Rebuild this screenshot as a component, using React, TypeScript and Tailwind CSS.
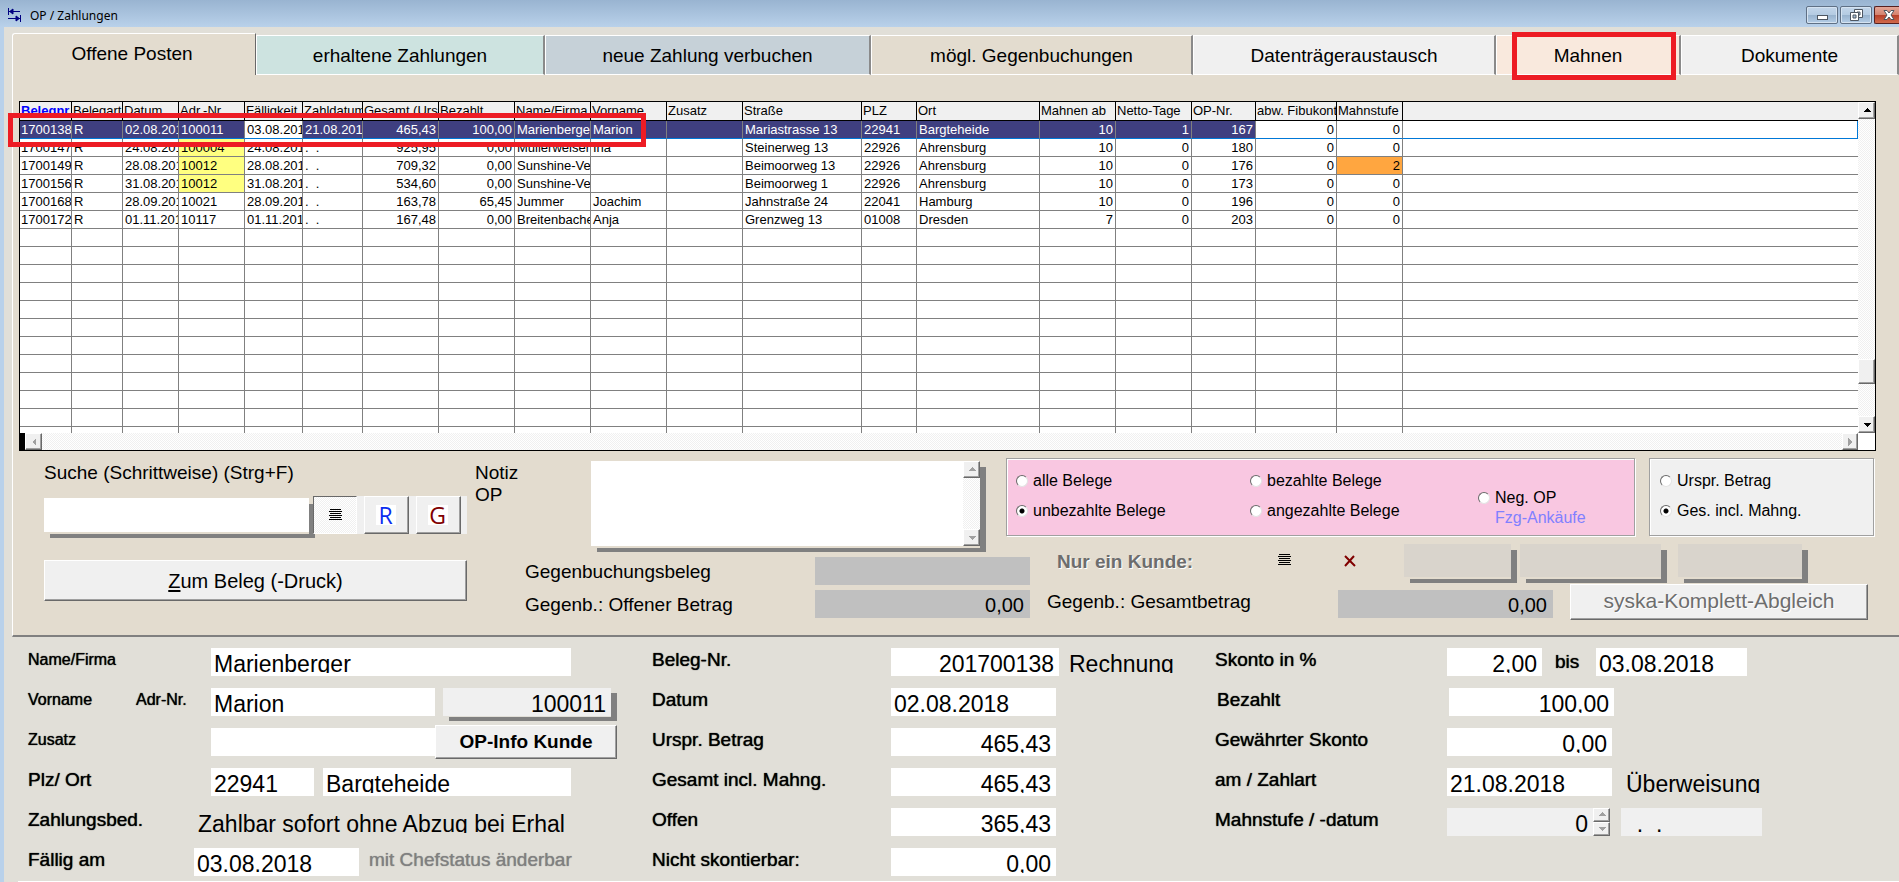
import type { ReactNode } from "react";
import clsx from "clsx";

const bevel =
  "bg-[#f0f0f0] border border-white border-r-[#696969] border-b-[#696969] shadow-[inset_-1px_-1px_0_#a0a0a0]";
const dither = "bg-[repeating-conic-gradient(#fff_0_25%,#f0f0f0_0_50%)] bg-[length:2px_2px]";

const tabs = [
  { name: "erhaltene Zahlungen", color: "bg-[#cde3e0]" },
  { name: "neue Zahlung verbuchen", color: "bg-[#c6d1d8]" },
  { name: "mögl. Gegenbuchungen", color: "bg-[#e3dccf]" },
  { name: "Datenträgeraustausch", color: "bg-[#f0f0f0]" },
  { name: "Mahnen", color: "bg-[#f9e9dd]", marked: true },
  { name: "Dokumente", color: "bg-[#f0f0f0]" },
];

const columns = [
  { name: "Belegnr", width: "w-[52px]" },
  { name: "Belegart", width: "w-[51px]" },
  { name: "Datum", width: "w-[56px]" },
  { name: "Adr.-Nr.", width: "w-[66px]" },
  { name: "Fälligkeit", width: "w-[58px]" },
  { name: "Zahldatum", width: "w-[60px]" },
  { name: "Gesamt (Urspr.)", width: "w-[76px]", right: true },
  { name: "Bezahlt", width: "w-[76px]", right: true },
  { name: "Name/Firma", width: "w-[76px]" },
  { name: "Vorname", width: "w-[76px]" },
  { name: "Zusatz", width: "w-[76px]" },
  { name: "Straße", width: "w-[119px]" },
  { name: "PLZ", width: "w-[55px]" },
  { name: "Ort", width: "w-[123px]" },
  { name: "Mahnen ab", width: "w-[76px]", right: true },
  { name: "Netto-Tage", width: "w-[76px]", right: true },
  { name: "OP-Nr.", width: "w-[64px]", right: true },
  { name: "abw. Fibukonto", width: "w-[81px]", right: true },
  { name: "Mahnstufe", width: "w-[66px]", right: true },
  { name: "", width: "" },
];

const rows = [
  ["1700138", "R", "02.08.2018", "100011", "03.08.2018", "21.08.2018", "465,43", "100,00", "Marienberger", "Marion", "", "Mariastrasse 13", "22941", "Bargteheide", "10", "1", "167", "0", "0", ""],
  ["1700147", "R", "24.08.2018", "100004", "24.08.2018", ".  .", "925,95", "0,00", "Müllerweiser", "Ina", "", "Steinerweg 13", "22926", "Ahrensburg", "10", "0", "180", "0", "0", ""],
  ["1700149", "R", "28.08.2018", "10012", "28.08.2018", ".  .", "709,32", "0,00", "Sunshine-Ve", "", "", "Beimoorweg 13", "22926", "Ahrensburg", "10", "0", "176", "0", "2", ""],
  ["1700156", "R", "31.08.2018", "10012", "31.08.2018", ".  .", "534,60", "0,00", "Sunshine-Ve", "", "", "Beimoorweg 1", "22926", "Ahrensburg", "10", "0", "173", "0", "0", ""],
  ["1700168", "R", "28.09.2018", "10021", "28.09.2018", ".  .", "163,78", "65,45", "Jummer", "Joachim", "", "Jahnstraße 24", "22041", "Hamburg", "10", "0", "196", "0", "0", ""],
  ["1700172", "R", "01.11.2018", "10117", "01.11.2018", ".  .", "167,48", "0,00", "Breitenbacher", "Anja", "", "Grenzweg 13", "01008", "Dresden", "7", "0", "203", "0", "0", ""],
  ...Array.from({ length: 12 }, () => Array(20).fill("")),
];

function Arrow({ dir, color = "#000" }: { dir: "up" | "down" | "left" | "right"; color?: string }) {
  const d = {
    up: "M4 1 L8 5 H0 Z",
    down: "M0 2 H8 L4 6 Z",
    left: "M6 0 V8 L2 4 Z",
    right: "M2 0 V8 L6 4 Z",
  }[dir];
  return (
    <svg width="8" height="8" viewBox="0 0 8 8" shapeRendering="crispEdges">
      <path d={d} fill={color} />
    </svg>
  );
}

function ScrollButton({ dir, color, label, className }: { dir: "up" | "down" | "left" | "right"; color?: string; label: string; className: string }) {
  return (
    <button type="button" aria-label={label} className={clsx("flex shrink-0 items-center justify-center", bevel, className)}>
      <Arrow dir={dir} color={color} />
    </button>
  );
}

function ListIcon() {
  return (
    <svg width="13" height="12" viewBox="0 0 13 12" shapeRendering="crispEdges" stroke="#000">
      <path d="M1 .5H12M0 2.5H13M1 4.5H12M0 6.5H13M1 8.5H12M0 10.5H13" />
    </svg>
  );
}

function TitleBar() {
  const glass =
    "flex h-[18px] items-center rounded-[2px] border border-[#5f7085] bg-[linear-gradient(#c3d6ea,#b4cbe2_48%,#98b3ce_52%,#b4cde6)] shadow-[inset_0_0_0_1px_#d5e3f1]";
  return (
    <header className="flex h-[27px] items-start bg-gradient-to-b from-[#99b4d1] to-[#b9d1ea] pl-2 pt-[6px]">
      <svg width="13" height="15" viewBox="0 0 13 15" className="mt-px" fill="none" stroke="#000080" strokeWidth="1">
        <path d="M.5 1V8M1 4.5H12M5 2L2 4.5L5 7M12.5 8V15M0 11.5H12M8 9L11 11.5L8 14" />
        <path d="M2 4.5L5 2V7ZM11 11.5L8 9V14Z" fill="#000080" />
      </svg>
      <h1 className="ml-[9px] font-['Noto_Sans'] text-[12px] leading-5">OP / Zahlungen</h1>
      <div className="ml-auto flex gap-[2px]">
        <button type="button" aria-label="Minimieren" className={clsx(glass, "w-8 justify-center pt-1")}>
          <svg width="11" height="5" viewBox="0 0 11 5">
            <rect x=".5" y=".5" width="10" height="4" fill="#fff" stroke="#4d5661" />
          </svg>
        </button>
        <button type="button" aria-label="Wiederherstellen" className={clsx(glass, "w-8 justify-center")}>
          <svg width="13" height="12" viewBox="0 0 13 12" fill="#fff" stroke="#4d5661">
            <path d="M4.500 .500H12.500V8.500H4.500Z" />
            <path d="M7 3H10V6H7Z" fill="#a9c0d8" />
            <path d="M.500 3.500H8.500V11.500H.500Z" />
            <path d="M3 6H6V9H3Z" fill="#a9c0d8" />
          </svg>
        </button>
        <button
          type="button"
          aria-label="Schließen"
          className="flex h-[18px] w-[25px] items-center justify-center rounded-l-[2px] border border-r-0 border-[#56201f] bg-[linear-gradient(#e3a596,#d5836f_48%,#b8402a_52%,#d06a4c)] pl-1"
        >
          <svg width="12" height="10" viewBox="0 0 12 10">
            <path d="M1 .5H4L6 3L8 .5H11L8 5L11 9.500H8L6 7L4 9.500H1L4 5Z" fill="#fff" stroke="#4d5661" />
          </svg>
        </button>
      </div>
    </header>
  );
}

function TabBar() {
  return (
    <nav className="grid h-[42px] grid-cols-[244fr_289fr_326fr_322fr_303fr_185fr_218fr] items-end text-[19px]">
      <button type="button" className="h-full rounded-tl-[3px] border-l border-t border-r border-white border-r-[#696969] bg-[#e3dccf] pb-px pr-1">
        Offene Posten
      </button>
      {tabs.map((tab) => (
        <button
          key={tab.name}
          type="button"
          className={clsx("relative h-10 border-b border-t border-l border-white border-r-2 border-r-[#8a8a8a] pt-[2px]", tab.color)}
        >
          {tab.name}
          {tab.marked && (
            <span className="absolute -top-1 left-[15px] right-[3px] h-12 border-[5px] border-[#ed1c24]" />
          )}
        </button>
      ))}
    </nav>
  );
}

function cellColor(row: number, col: number) {
  if (row === 0) {
    if (col === 4) return "bg-white text-black border-b-[#0078d7]";
    return col < 17 ? "bg-[#3f3f80] text-white border-b-[#0078d7]" : "bg-white border-b-[#0078d7]";
  }
  if (col === 3 && row < 4) return "bg-[#ffff80]";
  if (row === 2 && col === 18) return "bg-[#ffa640]";
  return "bg-white";
}

function OpenItems() {
  return (
    <div className="relative ml-[6px] mr-[23px] border border-black">
      <div className="flex h-[331px]">
        <div className="min-w-0 flex-1 overflow-hidden">
          <table className="w-full table-fixed border-separate border-spacing-0 text-[13px]">
            <thead>
              <tr>
                {columns.map((col, i) => (
                  <th
                    key={i}
                    className={clsx(
                      "h-[19px] overflow-hidden whitespace-nowrap border-b border-black bg-[#f0f0f0] p-0 pl-px text-left leading-[18px]",
                      col.width,
                      i < 19 && "border-r",
                      i === 0 ? "font-bold text-[#0000ff]" : "font-normal"
                    )}
                  >
                    {col.name}
                  </th>
                ))}
              </tr>
            </thead>
            <tbody>
              {rows.map((row, r) => (
                <tr key={r}>
                  {row.map((cell, c) => (
                    <td
                      key={c}
                      className={clsx(
                        "h-[18px] overflow-hidden whitespace-pre border-b border-[#808080] p-0 leading-[17px]",
                        c < 19 && "border-r",
                        r === 0 && c === 19 && "border-r border-r-[#0078d7]",
                        c === 0 ? "pl-px" : columns[c].right ? "pr-[2px] text-right" : "pl-[2px]",
                        cellColor(r, c)
                      )}
                    >
                      {cell}
                    </td>
                  ))}
                </tr>
              ))}
            </tbody>
          </table>
        </div>
        <div className={clsx("flex w-[17px] flex-col justify-between", dither)}>
          <ScrollButton dir="up" label="Nach oben" className="h-[17px]" />
          <div className={clsx("mb-8 mt-auto h-[25px]", bevel)} />
          <ScrollButton dir="down" label="Nach unten" className="h-[17px]" />
        </div>
      </div>
      <div className="flex h-[17px]">
        <div className="w-[5px] bg-black" />
        <div className={clsx("flex flex-1 justify-between", dither)}>
          <ScrollButton dir="left" color="#a0a0a0" label="Nach links" className="w-[17px]" />
          <ScrollButton dir="right" color="#a0a0a0" label="Nach rechts" className="w-4" />
        </div>
        <div className="w-[17px] bg-white" />
      </div>
      <span className="absolute -left-3 top-[11px] h-[34px] w-[638px] border-[5px] border-[#ed1c24]" />
    </div>
  );
}

function Radio({ name, label, checked }: { name: string; label: string; checked?: boolean }) {
  return (
    <label className="flex items-center gap-[5px] text-[16px] leading-5">
      <input
        type="radio"
        name={name}
        defaultChecked={checked}
        className="h-3 w-3 appearance-none rounded-full border border-[#696969] border-b-[#e3e3e3] border-r-[#e3e3e3] bg-white checked:bg-[radial-gradient(circle,#000_0_2px,#fff_3px)]"
      />
      {label}
    </label>
  );
}

function SearchBlock() {
  return (
    <div className="w-[423px] shrink-0">
      <label htmlFor="suche" className="block pt-1 text-[19px] leading-[22px]">
        Suche (Schrittweise) (Strg+F)
      </label>
      <div className="mt-3 flex">
        <input
          id="suche"
          className="mt-[2px] h-[34px] w-[265px] bg-white px-1 text-[19px] outline-none shadow-[0_2px_0_#e3dccf,6px_6px_0_#808080]"
        />
        <div className="relative ml-1 flex flex-1 gap-[7px] bg-[#f0f0f0]">
          <button
            type="button"
            aria-label="Liste"
            className={clsx("flex h-[38px] w-11 items-center justify-center border border-[#696969] border-b-white border-r-white", dither)}
          >
            <ListIcon />
          </button>
          <button type="button" className={clsx("flex h-[38px] w-[45px] items-center justify-center pr-[2px]", bevel)}>
            <span className="w-5 bg-white font-['Open_Sans'] text-[23px] leading-5 text-[#0a2cf0]">R</span>
          </button>
          <button type="button" className={clsx("flex h-[38px] w-[45px] items-center justify-center pr-[2px]", bevel)}>
            <span className="w-5 bg-white font-['Open_Sans'] text-[23px] leading-5 text-[#800000]">G</span>
          </button>
        </div>
      </div>
      <button type="button" className={clsx("mt-[26px] h-[41px] w-full text-[20px]", bevel)}>
        <span className="underline underline-offset-2">Z</span>um Beleg (-Druck)
      </button>
    </div>
  );
}

function FilterBlock() {
  const shadowBox = "h-[33px] bg-[#d9d4cc] outline-none shadow-[0_2px_0_#e3dccf,6px_6px_0_#808080]";
  const grayBox = "h-7 w-[215px] bg-[#c0c0c0] pr-[6px] pt-[2px] text-right text-[20px] outline-none";
  return (
    <div className="ml-2 min-w-0 flex-1 text-[19px]">
      <div className="flex h-[86px] items-start">
        <label htmlFor="notiz" className="w-[116px] pt-1 leading-[22px]">
          Notiz
          <br />
          OP
        </label>
        <div className="mt-[3px] flex h-[85px] w-[389px] shadow-[0_2px_0_#e3dccf,6px_6px_0_#808080]">
          <textarea id="notiz" className="min-w-0 flex-1 resize-none bg-white p-1 outline-none" />
          <div className={clsx("flex w-[17px] flex-col justify-between", dither)}>
            <ScrollButton dir="up" color="#a0a0a0" label="Notiz nach oben" className="h-[17px]" />
            <ScrollButton dir="down" color="#a0a0a0" label="Notiz nach unten" className="h-[17px]" />
          </div>
        </div>
        <div className="ml-[26px] grid h-[78px] flex-1 grid-cols-[234px_228px_1fr] border border-[#a0a0a0] bg-[#f9c7e1] pl-[9px] pt-[7px] shadow-[inset_1px_1px_0_#fff,1px_1px_0_#fff]">
          <div className="grid h-[60px] grid-rows-2">
            <Radio name="belege" label="alle Belege" />
            <Radio name="belege" label="unbezahlte Belege" checked />
          </div>
          <div className="grid h-[60px] grid-rows-2">
            <Radio name="belege" label="bezahlte Belege" />
            <Radio name="belege" label="angezahlte Belege" />
          </div>
          <div className="pt-[22px]">
            <Radio name="belege" label="Neg. OP" />
            <p className="pl-[17px] text-[16px] leading-5 text-[#8080ff]">Fzg-Ankäufe</p>
          </div>
        </div>
        <div className="ml-[14px] h-[78px] w-[225px] border border-[#a0a0a0] bg-[#f0f0f0] pl-[10px] pt-[7px] shadow-[inset_1px_1px_0_#fff,1px_1px_0_#fff]">
          <div className="grid h-[60px] grid-rows-2">
            <Radio name="betrag" label="Urspr. Betrag" />
            <Radio name="betrag" label="Ges. incl. Mahng." checked />
          </div>
        </div>
      </div>

      <div className="flex items-start">
        <div className="ml-[50px] grid grid-cols-[290px_215px] gap-y-[5px] pt-[13px] leading-[30px]">
          <label htmlFor="gbeleg" className="h-7">Gegenbuchungsbeleg</label>
          <input id="gbeleg" readOnly className={grayBox} />
          <label htmlFor="goffen" className="h-7">Gegenb.: Offener Betrag</label>
          <input id="goffen" readOnly defaultValue="0,00" className={grayBox} />
        </div>
        <div className="ml-[17px] flex-1">
          <div className="flex">
            <span className="w-[220px] pl-[10px] font-bold leading-9 text-[#6d6d6d] [text-shadow:1px_1px_0_#fff]">
              Nur ein Kunde:
            </span>
            <button type="button" aria-label="Kunde wählen" className="flex h-8 w-[34px] items-center justify-center">
              <ListIcon />
            </button>
            <button type="button" aria-label="Kunde löschen" className="ml-8 mr-[37px] flex h-[34px] w-[34px] items-center justify-center">
              <svg width="12" height="12" viewBox="0 0 12 12" stroke="#800000" strokeWidth="2">
                <path d="M1 1L11 11M10 1L1 11" />
              </svg>
            </button>
            <input aria-label="Kundennummer" readOnly className={clsx(shadowBox, "w-[107px]")} />
            <input aria-label="Kundenname" readOnly className={clsx(shadowBox, "ml-[9px] w-[141px]")} />
            <input aria-label="Kundenvorname" readOnly className={clsx(shadowBox, "ml-[17px] w-[124px]")} />
          </div>
          <div className="mt-1 flex items-start">
            <label htmlFor="ggesamt" className="w-[291px] leading-9">
              Gegenb.: Gesamtbetrag
            </label>
            <input id="ggesamt" readOnly defaultValue="0,00" className={clsx(grayBox, "mt-[6px]")} />
            <button
              type="button"
              className={clsx("ml-[17px] mr-[6px] h-9 flex-1 pb-[2px] text-[21px] text-[#6d6d6d] [text-shadow:1px_1px_0_#fff]", bevel)}
            >
              syska-Komplett-Abgleich
            </button>
          </div>
        </div>
      </div>
    </div>
  );
}

function Field({ id, value, className, right }: { id: string; value?: string; className: string; right?: boolean }) {
  return (
    <input
      id={id}
      aria-label={id}
      defaultValue={value}
      className={clsx(
        "h-7 border-b-[3px] pl-[3px] pt-[7px] text-[23px] leading-[26px] outline-none",
        right && "pr-[5px] text-right",
        className
      )}
    />
  );
}

function Row({ id, label, labelClass, children }: { id: string; label: string; labelClass: string; children: ReactNode }) {
  return (
    <div className="flex h-7 items-start">
      <label htmlFor={id} className={clsx("shrink-0 leading-6 [text-shadow:0_0_1px_#000]", labelClass)}>
        {label}
      </label>
      {children}
    </div>
  );
}

function Details() {
  const white = "border-white bg-white";
  const gray = "border-[#f0f0f0] bg-[#f0f0f0]";
  const plain = "h-[25px] overflow-hidden whitespace-nowrap pt-[3px] text-[23px] leading-[26px]";
  return (
    <section className="grid grid-cols-[624fr_563fr_684fr] pb-[5px] pl-4 pt-[11px]">
      <div className="grid content-start gap-3">
        <Row id="Name" label="Name/Firma" labelClass="w-[183px] text-[16px]">
          <Field id="Name" value="Marienberger" className={clsx("w-[360px]", white)} />
        </Row>
        <Row id="Vorname" label="Vorname" labelClass="w-[108px] text-[16px]">
          <label htmlFor="Adr-Nr" className="w-[75px] text-[16px] leading-6 [text-shadow:0_0_1px_#000]">
            Adr-Nr.
          </label>
          <Field id="Vorname" value="Marion" className={clsx("w-[224px]", white)} />
          <Field
            id="Adr-Nr"
            value="100011"
            right
            className={clsx("ml-2 w-[168px] shadow-[0_1px_0_#e1dfd8,6px_5px_0_#808080]", gray)}
          />
        </Row>
        <Row id="Zusatz" label="Zusatz" labelClass="w-[183px] text-[16px]">
          <Field id="Zusatz" className={clsx("w-[224px]", white)} />
          <button type="button" className={clsx("-mt-[3px] h-[34px] w-[182px] text-[19px] font-bold", bevel)}>
            OP-Info Kunde
          </button>
        </Row>
        <Row id="Plz" label="Plz/ Ort" labelClass="w-[183px] text-[19px]">
          <Field id="Plz" value="22941" className={clsx("w-[103px]", white)} />
          <Field id="Ort" value="Bargteheide" className={clsx("ml-[9px] w-[248px]", white)} />
        </Row>
        <Row id="Zahlungsbed" label="Zahlungsbed." labelClass="w-[170px] text-[19px]">
          <output id="Zahlungsbed" className={plain}>
            Zahlbar sofort ohne Abzug bei Erhal
          </output>
        </Row>
        <Row id="Fällig" label="Fällig am" labelClass="w-[166px] text-[19px]">
          <Field id="Fällig" value="03.08.2018" className={clsx("w-[165px]", white)} />
          <span className="pl-[10px] text-[19px] leading-6 text-[#808080] [text-shadow:0_0_1px_#808080]">
            mit Chefstatus änderbar
          </span>
        </Row>
      </div>

      <div className="grid content-start gap-3">
        <Row id="Beleg-Nr" label="Beleg-Nr." labelClass="w-[239px] text-[19px]">
          <Field id="Beleg-Nr" value="201700138" right className={clsx("w-[168px]", white)} />
          <span className={clsx(plain, "ml-[10px]")}>Rechnung</span>
        </Row>
        <Row id="Datum" label="Datum" labelClass="w-[239px] text-[19px]">
          <Field id="Datum" value="02.08.2018" className={clsx("w-[165px]", white)} />
        </Row>
        <Row id="Urspr" label="Urspr. Betrag" labelClass="w-[239px] text-[19px]">
          <Field id="Urspr" value="465,43" right className={clsx("w-[165px]", white)} />
        </Row>
        <Row id="Gesamt" label="Gesamt incl. Mahng." labelClass="w-[239px] text-[19px]">
          <Field id="Gesamt" value="465,43" right className={clsx("w-[165px]", white)} />
        </Row>
        <Row id="Offen" label="Offen" labelClass="w-[239px] text-[19px]">
          <Field id="Offen" value="365,43" right className={clsx("w-[165px]", white)} />
        </Row>
        <Row id="Nicht-skontierbar" label="Nicht skontierbar:" labelClass="w-[239px] text-[19px]">
          <Field id="Nicht-skontierbar" value="0,00" right className={clsx("w-[165px]", white)} />
        </Row>
      </div>

      <div className="grid content-start gap-3">
        <Row id="Skonto" label="Skonto in %" labelClass="w-[232px] text-[19px]">
          <Field id="Skonto" value="2,00" right className={clsx("w-[95px]", white)} />
          <label htmlFor="Skonto-bis" className="w-[54px] pl-[13px] text-[19px] leading-7 [text-shadow:0_0_1px_#000]">
            bis
          </label>
          <Field id="Skonto-bis" value="03.08.2018" className={clsx("w-[151px]", white)} />
        </Row>
        <Row id="Bezahlt" label="Bezahlt" labelClass="w-[234px] pl-[2px] text-[19px]">
          <Field id="Bezahlt" value="100,00" right className={clsx("w-[165px]", white)} />
        </Row>
        <Row id="Gewährt" label="Gewährter Skonto" labelClass="w-[232px] text-[19px]">
          <Field id="Gewährt" value="0,00" right className={clsx("w-[165px]", white)} />
        </Row>
        <Row id="Zahlart" label="am / Zahlart" labelClass="w-[232px] text-[19px]">
          <Field id="Zahlart" value="21.08.2018" className={clsx("w-[165px]", white)} />
          <span className={clsx(plain, "ml-[14px]")}>Überweisung</span>
        </Row>
        <Row id="Mahnstufe" label="Mahnstufe / -datum" labelClass="w-[232px] text-[19px]">
          <Field id="Mahnstufe" value="0" right className={clsx("w-[146px]", gray)} />
          <div className="flex flex-col">
            <ScrollButton dir="up" color="#a0a0a0" label="Mahnstufe erhöhen" className="h-[14px] w-[17px]" />
            <ScrollButton dir="down" color="#a0a0a0" label="Mahnstufe senken" className="h-[14px] w-[17px]" />
          </div>
          <Field id="Mahndatum" value="  .  ." className={clsx("ml-[11px] w-[141px]", gray)} />
        </Row>
      </div>
    </section>
  );
}

export default function App() {
  return (
    <div className="overflow-hidden bg-[#b9d1ea] font-['Liberation_Sans',sans-serif] text-black">
      <TitleBar />
      <main className="ml-1 bg-[#e1dfd8] pl-2 pt-[6px]">
        <TabBar />
        <section className="border-b-2 border-l border-b-[#808080] border-l-white bg-[#e3dccf] pb-[15px] pt-[26px]">
          <OpenItems />
          <div className="ml-[31px] mr-[25px] mt-[7px] flex">
            <SearchBlock />
            <FilterBlock />
          </div>
        </section>
        <Details />
        <div className="ml-[6px] h-px bg-white" />
      </main>
    </div>
  );
}
